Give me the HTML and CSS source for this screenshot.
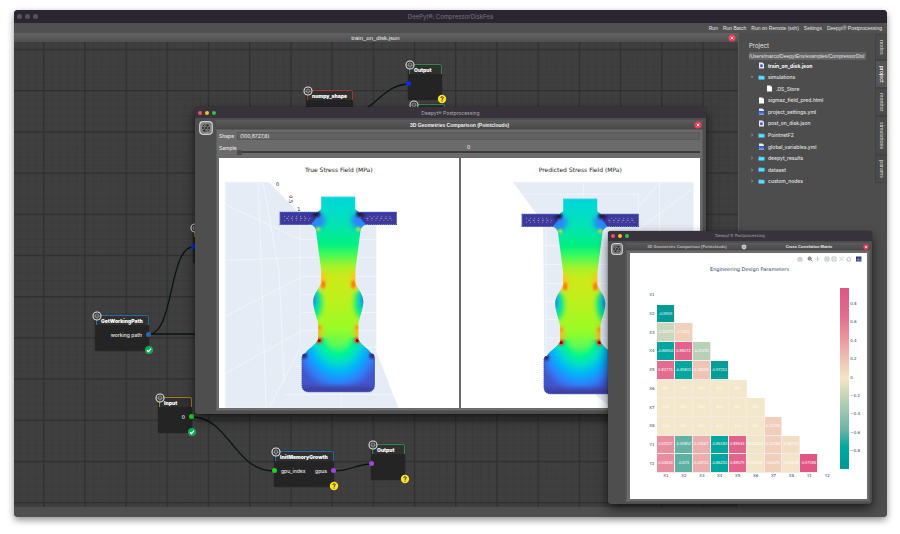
FILE: index.html
```html
<!doctype html>

<html lang="en">
    <head>
        <meta charset="utf-8">
        <title>DeePyt®: CompressorDiskFea</title>
        <link rel="stylesheet" href="styles.css">
    </head>
    <body>
        <!-- Shared icons -->
        <svg class="defs" width="0" height="0">
            <symbol id="i-gear" viewBox="0 0 10 10">
                <circle cx="5" cy="5" r="4" fill="#333" stroke="#e4e4e4" stroke-width="1.1"/>
                <circle cx="5" cy="5" r="1.9" fill="none" stroke="#ddd" stroke-width="1" stroke-dasharray="1.1 .4"/>
                <circle cx="5" cy="5" r=".6" fill="#ccc"/>
            </symbol>
            <symbol id="i-ok" viewBox="0 0 10 10">
                <circle cx="5" cy="5" r="4" fill="#0cab58"/>
                <path d="M3 5.2 4.5 6.6 7 3.6" fill="none" stroke="#fff" stroke-width="1.3"/>
            </symbol>
            <symbol id="i-ask" viewBox="0 0 10 10">
                <circle cx="5" cy="5" r="4.2" fill="#ffe226"/>
                <path d="M3.8 4C3.8 2.3 6.3 2.4 6.2 3.9 6.1 4.8 5 4.8 5 5.9M5 6.6V7.6" fill="none" stroke="#222" stroke-width="1"/>
            </symbol>
            <symbol id="i-close" viewBox="0 0 8 8">
                <circle cx="4" cy="4" r="3.6" fill="#f43b5a"/>
                <path d="M2.7 2.7 5.3 5.3M5.3 2.7 2.7 5.3" stroke="#fff" stroke-width=".9"/>
            </symbol>
            <symbol id="i-close-off" viewBox="0 0 8 8">
                <circle cx="4" cy="4" r="3.3" fill="#c8c8c8"/>
                <path d="M2.9 2.9 5.1 5.1M5.1 2.9 2.9 5.1" stroke="#888" stroke-width=".8"/>
            </symbol>
            <symbol id="i-logo" viewBox="0 0 14 14">
                <rect x=".7" y=".7" width="12.6" height="12.6" rx="3.5" fill="#777" stroke="#d2d2d2" stroke-width="1.2"/>
                <circle cx="7" cy="7" r="4.7" fill="#333" stroke="#aaa" stroke-width=".7"/>
                <path d="M7 2.5V11.5M3 5 11 9.2M3 9 11 5M5 3.4 9 11" stroke="#aaa" stroke-width=".7"/>
                <circle cx="7" cy="7" r="1.1" fill="#222"/>
            </symbol>
            <symbol id="i-folder" viewBox="0 0 7 7">
                <path d="M.6 1.2H3L3.5 1.8H6.4V5.8H.6Z" fill="#2aa6d6"/>
                <path d="M.6 2.3H6.4V5.2H.6Z" fill="#62dcf6"/>
            </symbol>
            <symbol id="i-file" viewBox="0 0 7 7">
                <path d="M1 .5H4.4L6 2.1V6.6H1Z" fill="#fff"/>
                <path d="M4.4 .5V2.1H6" fill="#bbb"/>
            </symbol>
            <symbol id="i-json" viewBox="0 0 7 7">
                <path d="M1 .5H4.4L6 2.1V6.6H1Z" fill="#e8eaf8"/>
                <rect x="2.2" y="2.4" width="2.5" height="2.7" fill="#4b58a8"/>
            </symbol>
            <symbol id="i-yml" viewBox="0 0 7 7">
                <path d="M1 .5H4.4L6 2.1V6.6H1Z" fill="#e8eaf8"/>
                <rect x=".4" y="3" width="6.3" height="2.7" fill="#1d56c8"/>
                <path d="M1.2 4.3H5.8" stroke="#7ea6f0" stroke-width=".8" stroke-dasharray="1 .5"/>
            </symbol>
            <symbol id="i-down" viewBox="0 0 4 4"><path d="M.8 1.4H3.2L2 2.8Z" fill="#ccc"/></symbol>
            <symbol id="i-right" viewBox="0 0 4 4"><path d="M1.2 .8 2.8 2 1.2 3.2" fill="none" stroke="#bbb" stroke-width=".6"/></symbol>

            <!-- Stress field on the disk section, used in both plots -->
            <defs>
                <linearGradient id="g-body" gradientUnits="userSpaceOnUse" x1="0" y1="15" x2="0" y2="175">
                    <stop offset="0" stop-color="#00d6dc"/>
                    <stop offset=".17" stop-color="#04e3b4"/>
                    <stop offset=".29" stop-color="#00f082"/>
                    <stop offset=".35" stop-color="#3cfa5c"/>
                    <stop offset=".43" stop-color="#a6f22a"/>
                    <stop offset=".5" stop-color="#cdea18"/>
                    <stop offset=".62" stop-color="#c0f01c"/>
                    <stop offset=".82" stop-color="#98fc26"/>
                    <stop offset=".92" stop-color="#5cfa56"/>
                    <stop offset="1" stop-color="#00f090"/>
                </linearGradient>
                <radialGradient id="g-base" gradientUnits="userSpaceOnUse" cx="0" cy="0" r="1" gradientTransform="translate(119 150) scale(46 60)">
                    <stop offset=".2" stop-color="#58fa5c" stop-opacity="0"/>
                    <stop offset=".36" stop-color="#00f592"/>
                    <stop offset=".5" stop-color="#00dfc8"/>
                    <stop offset=".66" stop-color="#00b4fa"/>
                    <stop offset=".84" stop-color="#2f80fa"/>
                    <stop offset="1" stop-color="#4256cc"/>
                </radialGradient>
                <clipPath id="c-disk">
                    <path id="p-disk" d="M102 15H136V27L140 30H177V42H148C143 43 141 46 141 50L136 88V100C137 105 144 111 144 119C144 127 139 137 139 143V157C142 163 149 166 152 171Q155 171 155 174V202Q155 209 148 209H90Q83 209 83 202V174Q83 171 86 171C89 166 96 163 99 157V143C99 137 94 127 94 119C94 111 101 105 102 100V88L97 50C97 46 95 43 90 42H61V30H98L102 27Z"/>
                </clipPath>
                <filter id="f-1"><feGaussianBlur stdDeviation="1"/></filter>
                <filter id="f-3" x="-50%" y="-50%" width="200%" height="200%"><feGaussianBlur stdDeviation="2.6"/></filter>
            </defs>
            <symbol id="disk" viewBox="0 0 239 225">
                <g clip-path="url(#c-disk)">
                    <rect x="60" y="10" width="120" height="200" fill="url(#g-body)"/>
                    <rect x="80" y="155" width="80" height="56" fill="url(#g-base)"/>
                    <g filter="url(#f-3)">
                        <ellipse cx="95" cy="38" rx="11" ry="9" fill="#2a86fa"/>
                        <ellipse cx="143" cy="38" rx="11" ry="9" fill="#2a86fa"/>
                        <ellipse cx="95" cy="120" rx="8" ry="16" fill="#00e898"/>
                        <ellipse cx="143" cy="120" rx="8" ry="16" fill="#00e898"/>
                        <ellipse cx="93" cy="117" rx="4" ry="10" fill="#1c70ff"/>
                        <ellipse cx="145" cy="117" rx="4" ry="10" fill="#1c70ff"/>
                        <ellipse cx="99" cy="150" rx="4" ry="8" fill="#ffb51e"/>
                        <ellipse cx="139" cy="150" rx="4" ry="8" fill="#ffb51e"/>
                        <ellipse cx="102" cy="97" rx="4" ry="9" fill="#ffc31e"/>
                        <ellipse cx="136" cy="97" rx="4" ry="9" fill="#ffc31e"/>
                        <path d="M83 204H155V212H83Z" fill="#3f3d9c"/>
                    </g>
                    <path d="M60 29H92L97 36 91 43H60ZM178 29H146L141 36 147 43H178Z" fill="#3e389a"/>
                    <g filter="url(#f-1)">
                        <ellipse cx="97" cy="32" rx="4" ry="3" fill="#2c1240"/>
                        <ellipse cx="141" cy="32" rx="4" ry="3" fill="#2c1240"/>
                        <circle cx="99" cy="47" r="2" fill="#c9ee28"/>
                        <circle cx="139" cy="47" r="2" fill="#c9ee28"/>
                        <ellipse cx="104" cy="102" rx="2" ry="4" fill="#ff7410"/>
                        <ellipse cx="134" cy="102" rx="2" ry="4" fill="#ff7410"/>
                        <circle cx="100" cy="145" r="2" fill="#ff8a1a"/>
                        <circle cx="138" cy="145" r="2" fill="#ff8a1a"/>
                        <circle cx="100" cy="158" r="3" fill="#f54414"/>
                        <circle cx="138" cy="158" r="3" fill="#f54414"/>
                        <circle cx="85" cy="173" r="3" fill="#3a2a7c"/>
                        <circle cx="153" cy="173" r="3" fill="#3a2a7c"/>
                    </g>
                    <circle cx="100" cy="158" r="1.6" fill="#8c0808"/>
                    <circle cx="138" cy="158" r="1.6" fill="#8c0808"/>
                </g>
                <path d="M83 174V202Q83 209 90 209H148Q155 209 155 202V174M98 30H61V42H90M140 30H177V42H148" fill="none" stroke="#3e48b4" stroke-width="1.2" stroke-dasharray="1.5 .5"/>
                <path d="M102 15H136" stroke="#08cfd8" stroke-width="1.4" stroke-dasharray="1.5 .5"/>
                <path d="M65 34H88M65 38H90M150 34H173M148 38H173" stroke="#b4b6e0" stroke-width=".7" stroke-dasharray="1 3"/>
                <path d="M67 36H91M147 36H174" stroke="#b4b6e0" stroke-width=".7" stroke-dasharray="2 2.6"/>
            </symbol>
        </svg>

        <div class="app">
            <header class="titlebar">
                <span class="lights off"><i></i><i></i><i></i></span>
                <span class="title">DeePyt®: CompressorDiskFea</span>
            </header>
            <nav class="menubar">
                <button>Run</button>
                <button>Run Batch</button>
                <button>Run on Remote (ssh)</button>
                <button>Settings</button>
                <button>Deepyt® Postprocessing</button>
            </nav>
            <div class="work">
                <main class="editor">
                    <div class="tab">
                        <span>train_on_disk.json</span>
                        <button class="close" aria-label="Close"><svg><use href="#i-close"/></svg></button>
                    </div>
                    <div class="canvas">
                        <svg class="wires">
                            <defs>
                                <pattern id="minor" x="29.6" y="7.4" width="8.24" height="8.24" patternUnits="userSpaceOnUse">
                                    <path d="M.5 0V8.24M0 .5H8.24" stroke="#393939" stroke-width=".8"/>
                                </pattern>
                                <pattern id="major" x="29" y="6.8" width="41.2" height="41.2" patternUnits="userSpaceOnUse">
                                    <path d="M.7 0V41.2M0 .7H41.2" stroke="#2f2f2f" stroke-width="1.2"/>
                                </pattern>
                            </defs>
                            <rect width="100%" height="100%" fill="url(#minor)"/>
                            <rect width="100%" height="100%" fill="url(#major)"/>
                            <g fill="none" stroke="#0a130d" stroke-width="1.3">
                                <path d="M340 72C362 66 370 43 394 42"/>
                                <path d="M135 292C160 292 155 205 179 205"/>
                                <path d="M135 292H184"/>
                                <path d="M178 375C215 375 220 429 260 429"/>
                                <path d="M320 429C336 429 342 422 358 422"/>
                            </g>
                        </svg>
                        <section class="node red" style="left:292px;top:48px;width:47px">
                            <svg class="gear"><use href="#i-gear"/></svg>
                            <h2>numpy_shape</h2>
                        </section>
                        <section class="node green" style="left:394px;top:22px;width:34px">
                            <svg class="gear"><use href="#i-gear"/></svg>
                            <h2>Output</h2>
                            <p><i class="port in blue"></i></p>
                            <svg class="state"><use href="#i-ask"/></svg>
                        </section>
                        <section class="node green" style="left:398px;top:62px;width:33px">
                            <svg class="gear"><use href="#i-gear"/></svg>
                            <h2></h2>
                        </section>
                        <section class="node orange" style="left:179px;top:185px;width:34px">
                            <svg class="gear"><use href="#i-gear"/></svg>
                            <h2></h2>
                            <p><i class="port in blue"></i></p>
                        </section>
                        <section class="node azure" style="left:81px;top:273px;width:54px">
                            <svg class="gear"><use href="#i-gear"/></svg>
                            <h2>GetWorkingPath</h2>
                            <p><span></span><span>working path</span><i class="port out steel"></i></p>
                            <svg class="state"><use href="#i-ok"/></svg>
                        </section>
                        <section class="node orange" style="left:144px;top:355px;width:34px">
                            <svg class="gear"><use href="#i-gear"/></svg>
                            <h2>Input</h2>
                            <p><span></span><span>0</span><i class="port out lime"></i></p>
                            <svg class="state"><use href="#i-ok"/></svg>
                        </section>
                        <section class="node azure" style="left:260px;top:409px;width:60px">
                            <svg class="gear"><use href="#i-gear"/></svg>
                            <h2>InitMemoryGrowth</h2>
                            <p><i class="port in lime"></i><span>gpu_index</span><span>gpus</span><i class="port out purple"></i></p>
                            <svg class="state"><use href="#i-ask"/></svg>
                        </section>
                        <section class="node green" style="left:357px;top:402px;width:34px">
                            <svg class="gear"><use href="#i-gear"/></svg>
                            <h2>Output</h2>
                            <p><i class="port in purple"></i></p>
                            <svg class="state"><use href="#i-ask"/></svg>
                        </section>
                    </div>
                </main>
                <aside class="project">
                    <label for="path">Project</label>
                    <select id="path"><option>/Users/marco/DeepytEnv/examples/CompressorDisl *</option></select>
                    <ul class="tree">
                        <li class="open"><b></b><svg><use href="#i-json"/></svg>train_on_disk.json</li>
                        <li><svg class="arrow"><use href="#i-down"/></svg><svg><use href="#i-folder"/></svg>simulations</li>
                        <li class="sub"><b></b><svg><use href="#i-file"/></svg>.DS_Store</li>
                        <li><b></b><svg><use href="#i-file"/></svg>sigmaz_field_pred.html</li>
                        <li><b></b><svg><use href="#i-yml"/></svg>project_settings.yml</li>
                        <li><b></b><svg><use href="#i-json"/></svg>post_on_disk.json</li>
                        <li><svg class="arrow"><use href="#i-right"/></svg><svg><use href="#i-folder"/></svg>PointnetF2</li>
                        <li><b></b><svg><use href="#i-yml"/></svg>global_variables.yml</li>
                        <li><svg class="arrow"><use href="#i-right"/></svg><svg><use href="#i-folder"/></svg>deepyt_results</li>
                        <li><svg class="arrow"><use href="#i-right"/></svg><svg><use href="#i-folder"/></svg>dataset</li>
                        <li><svg class="arrow"><use href="#i-right"/></svg><svg><use href="#i-folder"/></svg>custom_nodes</li>
                    </ul>
                </aside>
                <nav class="side-tabs">
                    <button>nodes</button>
                    <button class="on">project</button>
                    <button>monitor</button>
                    <button>simulations</button>
                    <button>params</button>
                </nav>
            </div>
            <footer class="status"></footer>
        </div>

        <!-- Point cloud comparison window -->
        <section class="window clouds">
            <header class="titlebar">
                <span class="lights"><i></i><i></i><i></i></span>
                <span class="title">Deepyt® Postprocessing</span>
            </header>
            <div class="window-body">
                <div class="rail"><svg class="logo"><use href="#i-logo"/></svg></div>
                <div class="pane">
                    <div class="tab">
                        <span>3D Geometries Comparison (Pointclouds)</span>
                        <button class="close" aria-label="Close"><svg><use href="#i-close"/></svg></button>
                    </div>
                    <div class="panel">
                        <div class="field">
                            <label for="shape">Shape</label>
                            <input id="shape" type="text" value="(100,8727,6)">
                        </div>
                        <div class="field sample">
                            <label for="sample">Sample</label>
                            <div class="slide">
                                <output for="sample">0</output>
                                <input id="sample" type="range" min="0" max="99" value="0">
                            </div>
                        </div>
                        <div class="plots">
                            <figure>
                                <figcaption>True Stress Field (MPa)</figcaption>
                                <svg viewBox="0 0 239 225">
                                    <path d="M6 0H50L85 36H157V169L179 225H6Z" fill="#e5ecf6"/>
                                    <g fill="none" stroke="#f4f7fb" stroke-width=".8">
                                        <path d="M6 22 81 57H157M6 78 82 75H157M6 134 83 94H157M6 191 83 148H157M81 30V165L50 225M39 0 42 78 47 225M44 0 60 90 65 200M83 112H157M83 130H157M83 165H157M78 184H157M66 212H174M122 209V225M6 0 6 225"/>
                                    </g>
                                    <g class="axis"><text x="57" y="4">0</text><text transform="translate(70 13) rotate(90)">0.5</text><text x="78" y="29">1</text></g>
                                    <use href="#disk" width="239" height="225"/>
                                </svg>
                            </figure>
                            <figure>
                                <figcaption>Predicted Stress Field (MPa)</figcaption>
                                <svg viewBox="0 0 239 225">
                                    <path d="M52 0H232V225H150L83 170 82 42 74 30Z" fill="#e5ecf6"/>
                                    <g fill="none" stroke="#f4f7fb" stroke-width=".8">
                                        <path d="M62 12H177V60M122 0V15M198 0V60M198 0 177 25M232 6 160 60M82 63H150M82 82H150M84 101H150M84 119H150M84 137H150M84 155H150M85 42V170"/>
                                    </g>
                                    <use href="#disk" y="2" width="239" height="225"/>
                                </svg>
                            </figure>
                        </div>
                    </div>
                </div>
            </div>
        </section>

        <!-- Correlation matrix window -->
        <section class="window matrix">
            <header class="titlebar">
                <span class="lights"><i></i><i></i><i></i></span>
                <span class="title">Deepyt® Postprocessing</span>
            </header>
            <div class="window-body">
                <div class="rail"><svg class="logo"><use href="#i-logo"/></svg></div>
                <div class="pane">
                    <div class="tabs">
                        <div class="tab dim">
                            <span>3D Geometries Comparison (Pointclouds)</span>
                            <button class="close" aria-label="Close"><svg><use href="#i-close-off"/></svg></button>
                        </div>
                        <div class="tab">
                            <span>Cross Correlation Matrix</span>
                            <button class="close" aria-label="Close"><svg><use href="#i-close"/></svg></button>
                        </div>
                    </div>
                    <div class="panel">
                        <div class="chart">
                            <svg class="modebar" viewBox="0 0 66 6">
                                <g fill="none" stroke="#b9bcc4" stroke-width=".9">
                                    <path d="M1 2H5V5H1ZM2.2 1.5H3.8"/>
                                    <circle cx="3" cy="3.4" r=".6"/>
                                    <circle cx="12.6" cy="2.5" r="1.6" stroke="#777b88" fill="#999"/>
                                    <path d="M13.8 3.7 15.4 5.4" stroke="#777b88"/>
                                    <path d="M20.5 .8V5.2M18.3 3H22.7" stroke-dasharray="1.2 .4"/>
                                    <path d="M28 1H32V5H28ZM29 3H31M30 2V4M35 1H39V5H35ZM36 3H38"/>
                                    <path d="M42.3 .8 46.7 5.2M46.7 .8 42.3 5.2" stroke-dasharray="2.3 1.2"/>
                                    <path d="M49.5 3 51.8 1.2 54 3M50.3 3V5H53.3V3" />
                                </g>
                                <rect x="59" y=".5" width="5.4" height="5" fill="#2a3f6a"/>
                                <path d="M60.3 4.8V3M61.7 4.8V2M63.2 4.8V3" stroke="#b8c8e8" stroke-width=".6"/>
                            </svg>
                            <h2>Engineering Design Parameters</h2>
                            <div class="chart-row">
                                <div class="heat" id="heat"></div>
                                <div class="scale">
                                    <div class="bar"></div>
                                    <ol>
                                        <li>0.8</li><li>0.6</li><li>0.4</li><li>0.2</li><li>0</li>
                                        <li>−0.2</li><li>−0.4</li><li>−0.6</li><li>−0.8</li>
                                    </ol>
                                </div>
                            </div>
                        </div>
                    </div>
                </div>
            </div>
        </section>

        <script src="heat.js"></script>
    </body>
</html>
```

FILE: styles.css
```css
* { box-sizing: border-box; }
body {
    display: flex;
    min-height: 100vh;
    margin: 0;
    padding: 10px 13px 17px 14px;
    overflow: hidden;
    background: #fff;
    color: #e6e6e6;
    font: 5px/8px Inter, "Liberation Sans", sans-serif;
}
button, input, select { font: inherit; color: inherit; border: 0; margin: 0; padding: 0; background: none; }
h2, p, ul, ol, figure { margin: 0; padding: 0; }
ul, ol { list-style: none; }
svg { display: block; }
.defs { position: absolute; }

/* windows */
.app {
    display: flex;
    flex: 1;
    flex-direction: column;
    border-radius: 4px;
    overflow: hidden;
    background: #4d4d4d;
    box-shadow: 0 3px 7px rgba(0, 0, 0, 0.45);
}
.titlebar {
    display: grid;
    grid-template-columns: 1fr auto 1fr;
    flex: none;
    align-items: center;
    height: 11px;
    padding: 0 3px;
    background: #37323b;
    color: #b0adb3;
}
.app > .titlebar { height: 13px; background: #2b2532; color: #77737c; font-size: 6px; }
.lights { display: flex; gap: 3px; }
.lights i { width: 4px; height: 4px; border-radius: 50%; background: #f2525a; }
.lights i:nth-child(2) { background: #f6bd2f; }
.lights i:nth-child(3) { background: #2bc840; }
.off { gap: 3px; }
.off i, .off i:nth-child(n) { width: 5px; height: 5px; background: #57535b; }
.window {
    position: absolute;
    display: flex;
    flex-direction: column;
    border-radius: 3px;
    overflow: hidden;
    background: #4e4e4e;
    box-shadow: 0 0 1px #111, 0 5px 12px rgba(0, 0, 0, 0.6);
}
.clouds { left: 195px; top: 107px; width: 511px; height: 307px; }
.matrix { left: 608px; top: 231px; width: 264px; height: 273px; }
.matrix .titlebar { height: 10px; font: 4px/8px "DejaVu Sans", sans-serif; }
.window-body { display: flex; flex: 1; min-height: 0; }
.rail { flex: none; width: 21px; padding: 3px 4px; }
.matrix .rail { width: 18px; padding: 2px 3px; }
.logo { width: 14px; height: 14px; }
.matrix .logo { width: 12px; height: 12px; }
.pane { display: flex; flex: 1; flex-direction: column; min-width: 0; padding: 2px 3px 3px 0; }
.matrix .pane { padding: 2px 2px 2px 0; }

/* menu and tabs */
.menubar {
    display: flex;
    flex: none;
    justify-content: flex-end;
    gap: 5px;
    height: 10px;
    padding: 0 5px;
    background: #505050;
    font-family: "Liberation Sans", sans-serif;
}
.tab {
    display: grid;
    grid-template-columns: 1fr auto 1fr;
    flex: none;
    align-items: center;
    height: 9px;
    padding: 0 1px;
    background: linear-gradient(#5b5b5b, #484848);
    color: #f0f0f0;
    font-weight: 500;
}
.tab span { grid-column: 2; }
.clouds .tab { font-family: "Liberation Sans", sans-serif; font-weight: 700; }
.close { justify-self: end; width: 8px; height: 8px; }
.close svg { width: 8px; height: 8px; }
.editor .tab { padding-right: 2px; background: linear-gradient(#626262, #505050); font-family: "Liberation Sans", sans-serif; font-size: 6px; }
.tabs { display: grid; grid-template-columns: 1fr 1fr; font: 4px/7px "Liberation Sans", sans-serif; }
.tabs .tab { height: 7px; font-weight: 700; }
.tabs .close, .tabs .close svg { width: 6px; height: 6px; }
.dim { color: #bdbdbd; }

/* main area */
.work { display: flex; flex: 1; min-height: 0; }
.editor { display: flex; flex: 1; flex-direction: column; min-width: 0; }
.canvas { position: relative; flex: 1; overflow: hidden; background: #3f3f3f; }
.wires { width: 100%; height: 100%; }
.status { flex: none; height: 10px; background: #4f4f4f; }

/* nodes */
.node {
    position: absolute;
    height: 36px;
    border-radius: 2px;
    background: #242424;
    box-shadow: 0 0 1px #111;
}
.node h2 {
    height: 10px;
    margin-left: 1px;
    padding-left: 4px;
    border: 1px solid;
    border-bottom: 0;
    border-radius: 2px 2px 0 0;
    background: #303030;
    font: 900 5px/10px Inter, sans-serif;
    white-space: nowrap;
}
.red h2 { border-color: #a03a2c; }
.green h2 { border-color: #2f8a4c; }
.azure h2 { border-color: #2070a8; }
.orange h2 { border-color: #a8801c; }
.node h2 { color: #fff; }
.node p { position: relative; display: flex; justify-content: space-between; height: 20px; padding: 0 7px; font-weight: 500; line-height: 20px; }
.port { position: absolute; top: 7px; width: 5px; height: 5px; border-radius: 50%; }
.in { left: -2px; }
.out { right: -2px; }
.port.blue { background: #0a2ce8; }
.port.steel { background: #2468b8; }
.port.lime { background: #1fd61f; }
.port.purple { background: #a044dc; }
.gear { position: absolute; left: -3px; top: -4px; width: 10px; height: 10px; }
.state { position: absolute; right: -5px; bottom: -4px; width: 10px; height: 10px; }

/* project panel */
.project { flex: none; width: 137px; padding: 8px 9px 0 10px; border-left: 1px solid #5a5a5a; }
.project label { display: block; height: 10px; font-size: 6px; line-height: 10px; }
.project select {
    display: block;
    width: 100%;
    height: 8px;
    margin-top: 1px;
    appearance: none;
    background: #626262;
    font-family: "Liberation Sans", sans-serif;
    font-size: 5px;
}
.tree { display: grid; grid-auto-rows: 1fr; height: 127px; padding-left: 1px; color: #e2e2e2; font-weight: 500; }
.tree li { display: flex; align-items: center; gap: 2px; }
.tree svg { width: 7px; height: 7px; margin-right: 1px; }
.tree .arrow, .tree b { width: 4px; height: 4px; margin-right: 2px; }
.tree .sub { padding-left: 8px; }
.tree .open { color: #fff; font-weight: 700; }
.side-tabs { display: flex; flex: none; flex-direction: column; width: 12px; padding-top: 1px; }
.side-tabs button {
    height: 26px;
    border: 1px solid #424242;
    border-right: 0;
    background: #4a4a4a;
    color: #c4c4c4;
    font-weight: 500;
    line-height: 10px;
    writing-mode: vertical-rl;
}
.side-tabs button:nth-child(n+2) { height: 28px; }
.side-tabs button:nth-child(4) { height: 39px; }
.side-tabs .on { background: #555; color: #eee; }

/* point clouds */
.panel {
    display: flex;
    flex: 1;
    flex-direction: column;
    min-height: 0;
    padding: 2px;
    border: 1px solid #5c5c5c;
    background: #6b6b6b;
}
.clouds .panel { gap: 2px; }
.matrix .panel { padding-left: 3px; }
.field { display: flex; flex: none; align-items: center; gap: 4px; height: 8px; font-weight: 500; }
.field label { width: 14px; }
.field input[type=text] { flex: 1; height: 8px; padding: 0 2px; border: 1px solid #5a5a5a; background: #626262; }
.sample { align-items: flex-start; height: 14px; }
.sample label { line-height: 12px; }
.slide { display: flex; flex: 1; flex-direction: column; padding-top: 1px; }
.slide output { text-align: center; }
.slide input { appearance: none; width: 100%; height: 2px; background: #3c3c3c; }
.slide input::-webkit-slider-thumb { appearance: none; width: 5px; height: 5px; border-radius: 1px; background: #4c4c4c; }
.plots { display: grid; grid-template-columns: 1fr 1fr; gap: 2px; flex: 1; min-height: 0; }
figure { display: flex; flex-direction: column; min-height: 0; background: #fff; }
figcaption { height: 24px; color: #222; font: 6px/23px "DejaVu Sans", sans-serif; text-align: center; }
figure svg { flex: 1; width: 100%; min-height: 0; overflow: visible; }
.axis { fill: #222; font: 5px "DejaVu Sans", sans-serif; }

/* correlation matrix */
.chart { flex: 1; padding: 3px 4px 0 17px; background: #fff; color: #2a3f5f; font: 4px/6px "DejaVu Sans", sans-serif; }
.modebar { width: 66px; height: 6px; margin-left: auto; }
.chart h2 { height: 24px; padding-right: 11px; font: 5px/14px "DejaVu Sans", sans-serif; text-align: center; }
.chart-row { display: flex; gap: 4px; padding-right: 3px; }
.heat {
    display: grid;
    grid-template-columns: 10px repeat(10, 1fr);
    grid-template-rows: repeat(10, 1fr) 6px;
    flex: 1;
    height: 193px;
}
.heat span { display: flex; align-items: center; justify-content: center; min-width: 0; }
.heat .cell { border: solid #f3ebe4; border-width: 0 1px 1px 0; color: #fff; font: 4px/6px "Liberation Sans", sans-serif; }
.scale { display: flex; gap: 1px; }
.scale .bar {
    width: 9px;
    height: 181px;
    margin-top: 2px;
    background: linear-gradient(#dd5684, #e26c8e 15%, #eb969f 28%, #efc4b4 40%, #f4e6c6 50%, #c3d4b6 60%, #6db5a6 78%, #00a8a0 88%, #009894);
}
.scale ol { display: flex; flex-direction: column; justify-content: space-between; height: 153px; margin-top: 15px; }
```

FILE: heat.js
```javascript
var names = ["X1", "X2", "X3", "X4", "X5", "X6", "X7", "X8", "Y1", "Y2"];
var rows = [
    [],
    ["-0.9919"],
    ["-0.20379", "0.1955"],
    ["-0.86902", "0.88072", "-0.29232"],
    ["0.82775", "-0.85815", "0.28098", "-0.97251"],
    ["0.0", "-0.0", "-0.0", "-0.0", "0.0"],
    ["-0.0", "0.0", "-0.0", "-0.0", "0.0", "-0.0"],
    ["-0.0", "0.0", "0.0", "-0.0", "-0.0", "-0.0", "0.21296"],
    ["0.63227", "-0.65852", "0.43567", "-0.86183", "0.88943", "-0.02253", "0.20284", "0.08737"],
    ["0.63634", "-0.673", "0.43712", "-0.86255", "0.88579", "0.02628", "0.2075", "0.03058", "0.97586"]
];

// Color stops of the diverging scale
var stops = [[-1, 0, 155, 150], [-0.85, 0, 168, 160], [-0.65, 105, 178, 165], [-0.25, 192, 211, 184],
    [0, 244, 232, 204], [0.2, 240, 208, 188], [0.45, 235, 172, 174], [0.63, 231, 143, 158],
    [0.85, 227, 104, 142], [1, 221, 84, 131]];

function color(v) {
    for (var i = 1; i < stops.length; i++) {
        var a = stops[i - 1], b = stops[i];
        if (v <= b[0]) {
            var t = (v - a[0]) / (b[0] - a[0]);
            return "rgb(" + [1, 2, 3].map(function (k) { return Math.round(a[k] + t * (b[k] - a[k])); }) + ")";
        }
    }
}

var heat = document.getElementById("heat");
function add(text, cls, bg) {
    var el = document.createElement("span");
    el.textContent = text;
    if (cls) el.className = cls;
    if (bg) el.style.background = bg;
    heat.appendChild(el);
}

rows.forEach(function (row, r) {
    add(names[r]);
    for (var c = 0; c < 10; c++) {
        if (c < row.length) add(row[c], "cell", color(+row[c]));
        else add("");
    }
});
add("");
names.forEach(function (n) { add(n); });
```
